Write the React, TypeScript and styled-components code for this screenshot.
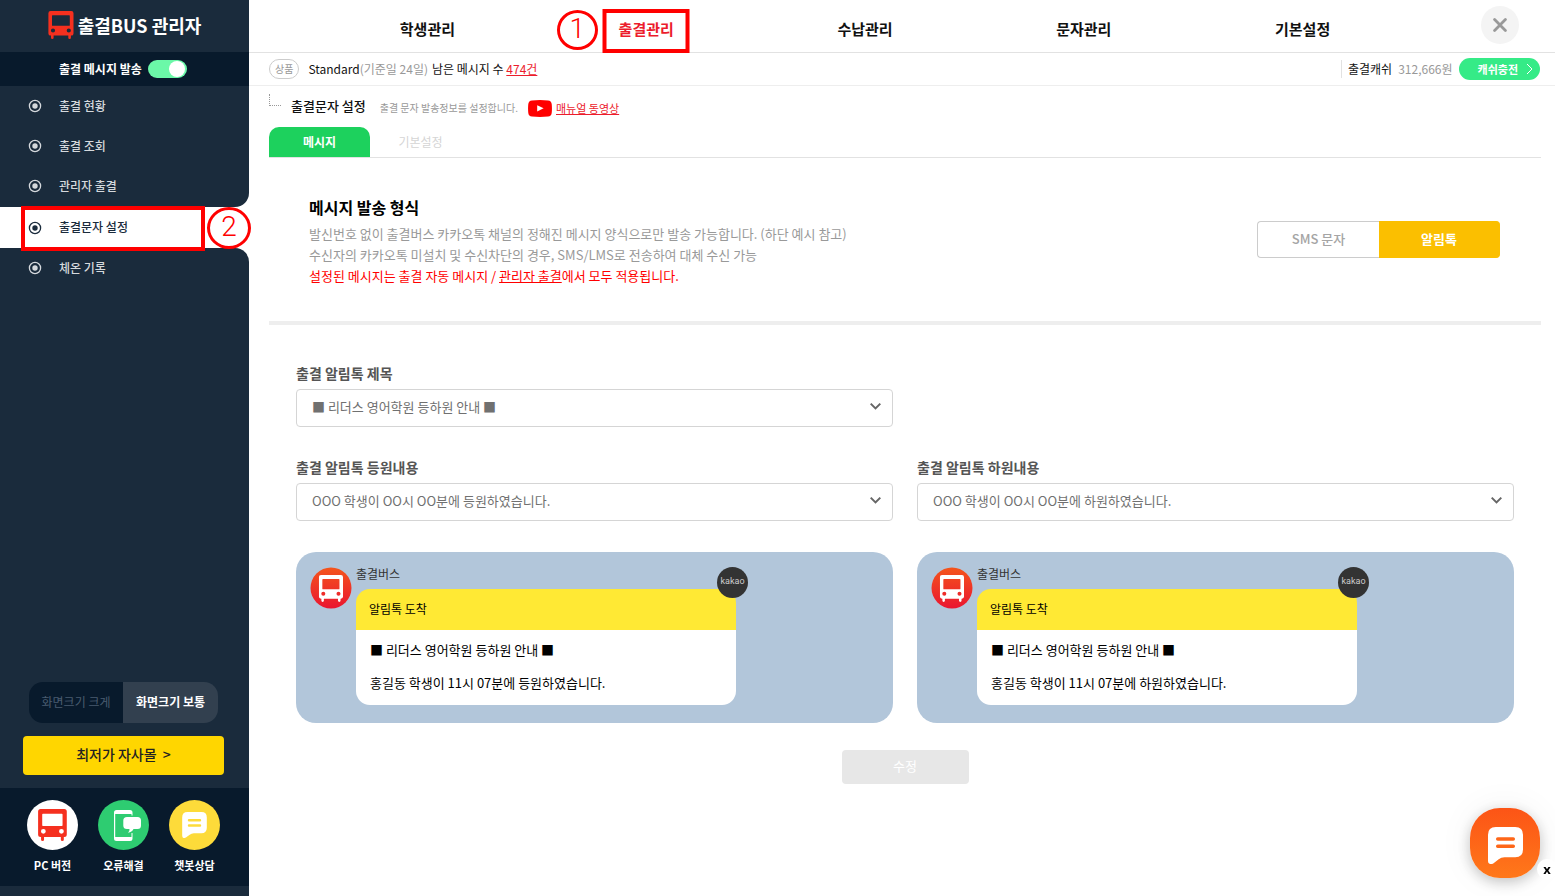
import React, { useState } from "react";
import styled, { createGlobalStyle } from "styled-components";

const GlobalStyle = createGlobalStyle`
  * { box-sizing: border-box; }
  body {
    margin: 0;
    background: #fff;
    color: #111;
    font-family: "Noto Sans CJK KR", "Noto Sans", sans-serif;
    font-size: 13px;
    line-height: 20px;
  }
  button, select { font: inherit; color: inherit; cursor: pointer; }
  button { border: 0; padding: 0; background: none; }
  h1, h2, p, ul { margin: 0; padding: 0; }
  a { color: inherit; }
`;

const Page = styled.div`
  display: flex;
  min-height: 100vh;
`;

/* Sidebar */

const Sidebar = styled.aside`
  flex: 0 0 249px;
  display: flex;
  flex-direction: column;
  color: #fff;
`;

const SideTop = styled.div`
  padding-bottom: 1px;
  background: #1a2b3c;
  border-bottom-right-radius: 14px;
`;

const SideBottom = styled.div`
  flex: 1;
  display: flex;
  flex-direction: column;
  background: #1a2b3c;
  border-top-right-radius: 14px;
`;

const Logo = styled.h1`
  display: flex;
  align-items: center;
  justify-content: center;
  gap: 4px;
  height: 52px;
  padding-bottom: 2px;
  font-size: 18px;
  font-weight: 700;
`;

const SendRow = styled.label`
  display: flex;
  align-items: center;
  gap: 6px;
  height: 34px;
  padding-left: 59px;
  background: #081a2c;
  font-size: 12px;
  font-weight: 700;
`;

const Switch = styled.input`
  appearance: none;
  position: relative;
  width: 39px;
  height: 18px;
  margin: 0;
  border-radius: 9px;
  background: #8593a1;
  &::before {
    content: "";
    position: absolute;
    top: 1px;
    left: 2px;
    width: 16px;
    height: 16px;
    border-radius: 50%;
    background: #fff;
  }
  &:checked { background: #6bf8a8; }
  &:checked::before { left: 21px; }
`;

const MenuLink = styled.a<{ $active?: boolean }>`
  display: flex;
  align-items: center;
  gap: 17px;
  height: ${(p) => (p.$active ? 41 : 40)}px;
  padding-left: 28px;
  font-size: 12px;
  font-weight: 500;
  text-decoration: none;
  color: ${(p) => (p.$active ? "#1a2b3c" : "#d5d9dd")};
  background: ${(p) => (p.$active ? "#fff" : "transparent")};
  svg { width: 14px; height: 14px; }
`;

const MenuText = styled.span`
  padding-bottom: 1px;
`;

const ActiveItem = styled.div`
  position: relative;
`;

const SideTools = styled.div`
  margin-top: auto;
  padding: 0 25px 13px 23px;
`;

const SizeSwitch = styled.div`
  display: grid;
  grid-template-columns: 94px 1fr;
  height: 41px;
  margin: 0 6px 13px;
  border-radius: 14px;
  overflow: hidden;
`;

const SizeButton = styled.button<{ $on: boolean }>`
  padding-bottom: 2px;
  font-size: 12px;
  font-weight: ${(p) => (p.$on ? 700 : 400)};
  color: ${(p) => (p.$on ? "#fff" : "#4a5c70")};
  background: ${(p) => (p.$on ? "#32404f" : "#081a2c")};
`;

const MallButton = styled.button`
  width: 100%;
  height: 39px;
  padding-bottom: 4px;
  border-radius: 4px;
  background: #ffd600;
  color: #222;
  font-size: 14px;
  font-weight: 500;
`;

const Shortcuts = styled.div`
  display: flex;
  gap: 20px;
  height: 98px;
  padding: 12px 27px 0;
  margin-bottom: 10px;
  background: #081a2c;
`;

const Shortcut = styled.a`
  display: flex;
  flex-direction: column;
  align-items: center;
  gap: 5px;
  width: 51px;
  font-size: 11px;
  font-weight: 700;
  white-space: nowrap;
  text-decoration: none;
`;

const ShortcutIcon = styled.span<{ $bg: string }>`
  flex: none;
  display: grid;
  place-items: center;
  width: 51px;
  height: 50px;
  border-radius: 50%;
  background: ${(p) => p.$bg};
`;

/* Numbered markers laid over the menus */

const MarkBox = styled.span`
  position: absolute;
  border: 4px solid #f00;
  pointer-events: none;
`;

const TopMarkBox = styled(MarkBox)`
  left: 50%;
  top: 9px;
  width: 87px;
  height: 44px;
  transform: translateX(-50%);
`;

const SideMarkBox = styled(MarkBox)`
  left: 21px;
  top: -1px;
  width: 184px;
  height: 45px;
`;

const MarkNumber = styled.span`
  position: absolute;
  display: grid;
  place-items: center;
  border: 3px solid #f00;
  border-radius: 50%;
  color: #f00;
  font-family: Roboto, sans-serif;
  font-size: 28px;
  font-weight: 300;
  line-height: 28px;
  pointer-events: none;
`;

const TopMark = styled(MarkNumber)`
  left: 20px;
  top: 10px;
  width: 41px;
  height: 40px;
  padding-bottom: 2px;
`;

const SideMark = styled(MarkNumber)`
  left: 207px;
  top: 0;
  width: 44px;
  height: 42px;
  padding-bottom: 2px;
  z-index: 1;
`;

/* Main column */

const Main = styled.main`
  flex: 1;
  min-width: 0;
  display: flex;
  flex-direction: column;
`;

const TopBar = styled.header`
  display: flex;
  height: 53px;
  padding: 0 36px 0 69px;
  border-bottom: 1px solid #e2e2e2;
`;

const TopNav = styled.nav`
  flex: 1;
  display: grid;
  grid-template-columns: repeat(5, 1fr);
  margin-right: 69px;
`;

const TopLink = styled.a<{ $active?: boolean }>`
  display: grid;
  place-items: center;
  height: 52px;
  padding-top: 6px;
  font-size: 15px;
  font-weight: 700;
  text-decoration: none;
  color: ${(p) => (p.$active ? "#ec1c2c" : "#111")};
`;

const TopItem = styled.div`
  position: relative;
`;

const CloseButton = styled.button`
  display: grid;
  place-items: center;
  width: 38px;
  height: 38px;
  margin-top: 6px;
  border-radius: 50%;
  background: #f4f4f4;
`;

const InfoBar = styled.div`
  display: flex;
  align-items: center;
  height: 33px;
  padding: 0 15px 0 20px;
  border-bottom: 1px solid #eee;
  font-size: 12px;
`;

const Pill = styled.span`
  padding: 0 5px;
  margin-right: 9px;
  border: 1px solid #ccc;
  border-radius: 10px;
  color: #999;
  font-size: 10px;
  line-height: 18px;
`;

const Muted = styled.span`
  color: #999;
`;

const Remaining = styled.span`
  margin-left: 4px;
  a { color: #ec1c2c; }
`;

const Cash = styled.div`
  display: flex;
  align-items: center;
  gap: 6px;
  height: 18px;
  margin-left: auto;
  padding-left: 6px;
  border-left: 1px solid #e2e2e2;
`;

const ChargeButton = styled.button`
  display: flex;
  align-items: center;
  gap: 8px;
  height: 22px;
  padding: 0 7px 0 19px;
  border-radius: 11px;
  background: #35eb87;
  color: #fff;
  font-size: 11px;
  font-weight: 700;
`;

const Content = styled.div`
  padding: 0 14px 0 20px;
`;

const TitleRow = styled.div`
  display: flex;
  align-items: center;
  height: 41px;
  padding-bottom: 1px;
`;

const Branch = styled.span`
  width: 12px;
  height: 12px;
  margin: 0 10px 12px 0;
  border: 1px dotted #999;
  border-width: 0 0 1px 1px;
`;

const PageTitle = styled.h2`
  margin-right: 14px;
  font-size: 13px;
  font-weight: 500;
`;

const TitleNote = styled.p`
  margin-right: 10px;
  padding-top: 4px;
  font-size: 10px;
  color: #999;
`;

const ManualLink = styled.a`
  display: flex;
  align-items: center;
  gap: 4px;
  padding-top: 4px;
  font-size: 11px;
  color: #ec1c2c;
`;

const Tabs = styled.div`
  display: flex;
  height: 31px;
  border-bottom: 1px solid #e2e2e2;
`;

const Tab = styled.button<{ $on: boolean }>`
  width: 101px;
  height: 30px;
  border-radius: 10px 10px 0 0;
  font-size: 12px;
  font-weight: ${(p) => (p.$on ? 700 : 400)};
  color: ${(p) => (p.$on ? "#fff" : "#d5d5d5")};
  background: ${(p) => (p.$on ? "#1dd15d" : "transparent")};
`;

const FormatSection = styled.section`
  display: flex;
  justify-content: space-between;
  align-items: flex-start;
  min-height: 167px;
  padding: 36px 41px 0 40px;
  border-bottom: 4px solid #eee;
`;

const SectionTitle = styled.h2`
  margin-bottom: 3px;
  font-size: 16px;
  line-height: 26px;
  font-weight: 700;
  color: #000;
`;

const Guide = styled.p<{ $alert?: boolean }>`
  font-size: 13px;
  line-height: 21px;
  color: ${(p) => (p.$alert ? "#f00" : "#999")};
`;

const FormatSwitch = styled.div`
  display: grid;
  grid-template-columns: 122px 121px;
  height: 37px;
  margin-top: 27px;
`;

const FormatButton = styled.button<{ $on: boolean }>`
  padding-bottom: 2px;
  font-size: 13px;
  font-weight: ${(p) => (p.$on ? 700 : 500)};
  color: ${(p) => (p.$on ? "#fff" : "#a5a5a5")};
  background: ${(p) => (p.$on ? "#fbbf00" : "#fff")};
  border: 1px solid ${(p) => (p.$on ? "#fbbf00" : "#ccc")};
  &:first-child { border-radius: 4px 0 0 4px; border-right: 0; }
  &:last-child { border-radius: 0 4px 4px 0; border-left: 0; }
`;

const Form = styled.form`
  padding: 39px 27px 0;
`;

const Columns = styled.div`
  display: grid;
  grid-template-columns: 1fr 1fr;
  column-gap: 24px;
`;

const Field = styled.div`
  margin-bottom: 31px;
`;

const FieldLabel = styled.label`
  display: block;
  margin-bottom: 7px;
  font-size: 14px;
  font-weight: 700;
  line-height: 18px;
  color: #555;
`;

const SelectBox = styled.div`
  position: relative;
  svg {
    position: absolute;
    right: 12px;
    top: 13px;
    pointer-events: none;
  }
`;

const Select = styled.select`
  appearance: none;
  display: block;
  width: 100%;
  height: 38px;
  padding: 0 32px 2px 15px;
  border: 1px solid #d5d5d5;
  border-radius: 4px;
  background: #fff;
  color: #707070;
  font-size: 13px;
`;

const Preview = styled.article`
  display: flex;
  gap: 4px;
  height: 171px;
  padding: 15px 14px;
  border-radius: 20px;
  background: #b2c6da;
`;

const Bubble = styled.div`
  position: relative;
  flex: 0 1 380px;
  color: #000;
`;

const Sender = styled.div`
  height: 22px;
  font-size: 12px;
  line-height: 14px;
  color: #333;
`;

const BubbleHead = styled.div`
  height: 41px;
  padding: 0 13px;
  border-radius: 14px 14px 0 0;
  background: #ffe934;
  font-size: 12px;
  line-height: 40px;
`;

const BubbleBody = styled.div`
  display: grid;
  row-gap: 13px;
  padding: 10px 14px 12px;
  border-radius: 0 0 14px 14px;
  background: #fff;
  font-size: 13px;
`;

const KakaoBadge = styled.span`
  position: absolute;
  right: -12px;
  top: 0;
  width: 31px;
  height: 31px;
  border-radius: 50%;
  background: #333;
  color: #ccc;
  font-family: Roboto, sans-serif;
  font-size: 9px;
  line-height: 29px;
  text-align: center;
`;

const SubmitButton = styled.button`
  display: block;
  width: 127px;
  height: 34px;
  margin: 27px auto;
  padding-bottom: 2px;
  border-radius: 4px;
  background: #e7e7e7;
  color: #fff;
  font-size: 13px;
`;

const ChatDock = styled.div`
  position: fixed;
  right: 15px;
  bottom: 18px;
`;

const ChatButton = styled.button`
  display: grid;
  place-items: center;
  width: 70px;
  height: 70px;
  padding-top: 4px;
  border-radius: 30px;
  background: linear-gradient(#fc5416, #ff781a);
  box-shadow: 0 4px 14px rgba(0, 0, 0, 0.22), 0 0 36px rgba(0, 0, 0, 0.06);
`;

const DockClose = styled.button`
  position: absolute;
  right: -17px;
  bottom: -1px;
  width: 20px;
  height: 20px;
  border-radius: 50%;
  background: #fff;
  color: #000;
  font: 700 13px/18px "Noto Sans", sans-serif;
`;

/* Icons */

const BusIcon = ({ color, width, height }: { color: string; width: number; height: number }) => (
  <svg width={width} height={height} viewBox="0 0 26 28" fill={color} aria-hidden="true">
    <path
      fillRule="evenodd"
      d="M2.600 0H23.300Q25.500 0 25.500 2.200V22.400Q25.500 24.600 23.300 24.600H22.900V26.800Q22.900 28 21.600 28Q20.300 28 20.300 26.800V24.600H5.600V26.800Q5.600 28 4.300 28Q3 28 3 26.800V24.600H2.600Q.4 24.600 .4 22.400V2.200Q.4 0 2.600 0ZM4.600 4.200Q4 4.200 4 4.800V14.200Q4 14.800 4.600 14.800H21.200Q21.800 14.800 21.800 14.200V4.800Q21.800 4.200 21.200 4.200ZM5 17.400A2.100 2.100 0 1 0 5 21.600A2.100 2.100 0 1 0 5 17.400ZM20.800 17.400A2.100 2.100 0 1 0 20.800 21.600A2.100 2.100 0 1 0 20.800 17.400Z"
    />
  </svg>
);

const RadioMark = () => (
  <svg viewBox="0 0 14 14" aria-hidden="true">
    <circle cx="7" cy="7" r="5.6" fill="none" stroke="currentColor" strokeWidth="1.3" />
    <circle cx="7" cy="7" r="2.7" fill="currentColor" />
  </svg>
);

const TalkIcon = ({ width, height, line }: { width: number; height: number; line: string }) => (
  <svg width={width} height={height} viewBox="0 0 36 38" aria-hidden="true">
    <path d="M8 0H28Q36 0 36 8V23Q36 31 28 31H17Q13.500 31 11 33.200L5.400 37.400Q0 39.600 0 34.500V8Q0 0 8 0Z" fill="#fff" />
    <path d="M10 12.200H26M10 19.800H26" stroke={line} strokeWidth="3.600" strokeLinecap="round" />
  </svg>
);

const PhoneIcon = () => (
  <svg width="35" height="31" viewBox="-8 0 35 31" aria-hidden="true">
    <path
      fill="#fff"
      fillRule="evenodd"
      d="M2.500 0H16Q18.500 0 18.500 2.500V5.500H17.500V4H1.200V27H17.500V23H18.500V28.500Q18.500 31 16 31H2.500Q0 31 0 28.500V2.500Q0 0 2.500 0Z"
    />
    <path fill="#fff" d="M13 7H23.500Q27 7 27 10.500V15.500Q27 19 23.500 19H19.500Q18 22.300 14 22.800Q15.800 21.200 15.500 19H13Q9.300 19 9.300 15.500V10.500Q9.300 7 13 7Z" />
  </svg>
);

const Chevron = () => (
  <svg width="11" height="9" viewBox="0 0 11 9" fill="none" stroke="#666" strokeWidth="2" aria-hidden="true">
    <path d="M.7 1.600L5.500 6.400L10.300 1.600" />
  </svg>
);

const YoutubeIcon = () => (
  <svg width="24" height="17" viewBox="0 0 24 17" aria-hidden="true">
    <path d="M4 .4Q12-.2 20 .4Q23.400 .8 23.700 4Q24.200 8.500 23.700 13Q23.400 16.200 20 16.600Q12 17.200 4 16.600Q.6 16.200 .3 13Q-.2 8.500 .3 4Q.6 .8 4 .4Z" fill="#f00" />
    <path d="M9.200 5.200V11.400L15.600 8.300Z" fill="#fff" />
  </svg>
);

const BusAvatar = () => (
  <svg width="42" height="42" viewBox="0 0 42 42" aria-hidden="true">
    <defs>
      <linearGradient id="avatarFill" x1="0" y1="0" x2="0" y2="1">
        <stop offset="0" stopColor="#f4551c" />
        <stop offset="1" stopColor="#ea1530" />
      </linearGradient>
    </defs>
    <circle cx="21" cy="21" r="20.500" fill="url(#avatarFill)" />
    <svg x="8.500" y="8" width="25" height="27">
      <BusIcon color="#fff" width={25} height={27} />
    </svg>
  </svg>
);

const topMenu = ["학생관리", "출결관리", "수납관리", "문자관리", "기본설정"];

const SideItem = ({ label, active }: { label: string; active?: boolean }) => (
  <MenuLink href="#" $active={active}>
    <RadioMark />
    <MenuText>{label}</MenuText>
  </MenuLink>
);

const SelectField = ({ id, label, options }: { id: string; label: string; options: string[] }) => (
  <Field>
    <FieldLabel htmlFor={id}>{label}</FieldLabel>
    <SelectBox>
      <Select id={id}>
        {options.map((o) => (
          <option key={o}>{o}</option>
        ))}
      </Select>
      <Chevron />
    </SelectBox>
  </Field>
);

const PreviewCard = ({ message }: { message: string }) => (
  <Preview>
    <BusAvatar />
    <Bubble>
      <Sender>출결버스</Sender>
      <BubbleHead>알림톡 도착</BubbleHead>
      <BubbleBody>
        <p>■ 리더스 영어학원 등하원 안내 ■</p>
        <p>{message}</p>
      </BubbleBody>
      <KakaoBadge>kakao</KakaoBadge>
    </Bubble>
  </Preview>
);

export default function App() {
  const [sending, setSending] = useState(true);
  const [size, setSize] = useState("normal");
  const [tab, setTab] = useState("message");
  const [format, setFormat] = useState("talk");

  return (
    <Page>
      <GlobalStyle />
      <Sidebar>
        <SideTop>
          <Logo>
            <BusIcon color="#f5301f" width={26} height={28} />
            출결BUS 관리자
          </Logo>
          <SendRow>
            출결 메시지 발송
            <Switch type="checkbox" role="switch" checked={sending} onChange={(e) => setSending(e.target.checked)} />
          </SendRow>
          <SideItem label="출결 현황" />
          <SideItem label="출결 조회" />
          <SideItem label="관리자 출결" />
        </SideTop>
        <ActiveItem>
          <SideItem label="출결문자 설정" active />
          <SideMarkBox />
          <SideMark>2</SideMark>
        </ActiveItem>
        <SideBottom>
          <SideItem label="체온 기록" />
          <SideTools>
            <SizeSwitch>
              <SizeButton type="button" $on={size === "large"} onClick={() => setSize("large")}>
                화면크기 크게
              </SizeButton>
              <SizeButton type="button" $on={size === "normal"} onClick={() => setSize("normal")}>
                화면크기 보통
              </SizeButton>
            </SizeSwitch>
            <MallButton type="button">최저가 자사몰 &nbsp;&gt;</MallButton>
          </SideTools>
          <Shortcuts>
            <Shortcut href="#">
              <ShortcutIcon $bg="#fff">
                <BusIcon color="#f5301f" width={31} height={32} />
              </ShortcutIcon>
              PC 버전
            </Shortcut>
            <Shortcut href="#">
              <ShortcutIcon $bg="#2ecc71">
                <PhoneIcon />
              </ShortcutIcon>
              오류해결
            </Shortcut>
            <Shortcut href="#">
              <ShortcutIcon $bg="#fddb3a">
                <TalkIcon width={25} height={26} line="#fddb3a" />
              </ShortcutIcon>
              챗봇상담
            </Shortcut>
          </Shortcuts>
        </SideBottom>
      </Sidebar>

      <Main>
        <TopBar>
          <TopNav>
            {topMenu.map((label, i) => (
              <TopItem key={label}>
                <TopLink href="#" $active={i === 1}>
                  {label}
                </TopLink>
                {i === 1 && (
                  <>
                    <TopMarkBox />
                    <TopMark>1</TopMark>
                  </>
                )}
              </TopItem>
            ))}
          </TopNav>
          <CloseButton type="button" aria-label="닫기">
            <svg width="14" height="14" viewBox="0 0 14 14" stroke="#999" strokeWidth="2.800" strokeLinecap="round">
              <path d="M1.600 1.600L12.400 12.400M12.400 1.600L1.600 12.400" />
            </svg>
          </CloseButton>
        </TopBar>

        <InfoBar>
          <Pill>상품</Pill>
          <span>Standard</span>
          <Muted>(기준일 24일)</Muted>
          <Remaining>
            남은 메시지 수 <a href="#">474건</a>
          </Remaining>
          <Cash>
            <span>출결캐쉬</span>
            <Muted>312,666원</Muted>
            <ChargeButton type="button">
              캐쉬충전
              <svg width="7" height="12" viewBox="0 0 7 12" fill="none" stroke="#fff" aria-hidden="true">
                <path d="M1 1L6 6L1 11" />
              </svg>
            </ChargeButton>
          </Cash>
        </InfoBar>

        <Content>
          <TitleRow>
            <Branch />
            <PageTitle>출결문자 설정</PageTitle>
            <TitleNote>출결 문자 발송정보를 설정합니다.</TitleNote>
            <ManualLink href="#">
              <YoutubeIcon />
              매뉴얼 동영상
            </ManualLink>
          </TitleRow>
          <Tabs role="tablist">
            <Tab type="button" role="tab" aria-selected={tab === "message"} $on={tab === "message"} onClick={() => setTab("message")}>
              메시지
            </Tab>
            <Tab type="button" role="tab" aria-selected={tab === "basic"} $on={tab === "basic"} onClick={() => setTab("basic")}>
              기본설정
            </Tab>
          </Tabs>

          <FormatSection>
            <div>
              <SectionTitle>메시지 발송 형식</SectionTitle>
              <Guide>발신번호 없이 출결버스 카카오톡 채널의 정해진 메시지 양식으로만 발송 가능합니다. (하단 예시 참고)</Guide>
              <Guide>수신자의 카카오톡 미설치 및 수신차단의 경우, SMS/LMS로 전송하여 대체 수신 가능</Guide>
              <Guide $alert>
                설정된 메시지는 출결 자동 메시지 / <a href="#">관리자 출결</a>에서 모두 적용됩니다.
              </Guide>
            </div>
            <FormatSwitch>
              <FormatButton type="button" $on={format === "sms"} onClick={() => setFormat("sms")}>
                SMS 문자
              </FormatButton>
              <FormatButton type="button" $on={format === "talk"} onClick={() => setFormat("talk")}>
                알림톡
              </FormatButton>
            </FormatSwitch>
          </FormatSection>

          <Form onSubmit={(e) => e.preventDefault()}>
            <Columns>
              <SelectField id="talk-title" label="출결 알림톡 제목" options={["■ 리더스 영어학원 등하원 안내 ■"]} />
            </Columns>
            <Columns>
              <SelectField id="talk-in" label="출결 알림톡 등원내용" options={["OOO 학생이 OO시 OO분에 등원하였습니다."]} />
              <SelectField id="talk-out" label="출결 알림톡 하원내용" options={["OOO 학생이 OO시 OO분에 하원하였습니다."]} />
              <PreviewCard message="홍길동 학생이 11시 07분에 등원하였습니다." />
              <PreviewCard message="홍길동 학생이 11시 07분에 하원하였습니다." />
            </Columns>
            <SubmitButton type="submit">수정</SubmitButton>
          </Form>
        </Content>
      </Main>

      <ChatDock>
        <ChatButton type="button" aria-label="챗봇상담">
          <TalkIcon width={35} height={37} line="#fe6618" />
        </ChatButton>
        <DockClose type="button">x</DockClose>
      </ChatDock>
    </Page>
  );
}
